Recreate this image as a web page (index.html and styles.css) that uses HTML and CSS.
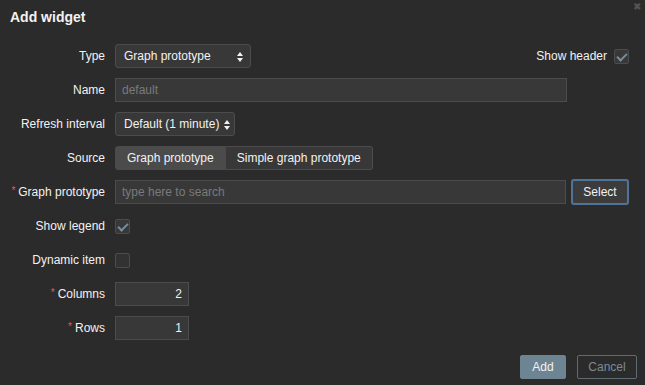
FILE: index.html
```html
<!DOCTYPE html>
<html lang="en">
<head>
  <meta charset="UTF-8" />
  <title>Add widget</title>
  <link rel="stylesheet" href="styles.css">
</head>
<body>
  <div class="dialog">
    <div class="dialog-head">
      <h2>Add widget</h2>
      <span class="close">&#x2716;</span>
    </div>

    <div class="form">
      <label>Type</label>
      <div class="field split">
        <div class="select type-select">Graph prototype<span class="arrows"></span></div>
        <div class="show-header">Show header <span class="check on"></span></div>
      </div>

      <label>Name</label>
      <div class="field"><div class="input name-input placeholder">default</div></div>

      <label>Refresh interval</label>
      <div class="field"><div class="select refresh-select">Default (1 minute)<span class="arrows"></span></div></div>

      <label>Source</label>
      <div class="field">
        <div class="segmented">
          <span class="seg active">Graph prototype</span>
          <span class="seg">Simple graph prototype</span>
        </div>
      </div>

      <label><span class="req">*</span> Graph prototype</label>
      <div class="field">
        <div class="input search-input placeholder">type here to search</div>
        <button class="btn-select">Select</button>
      </div>

      <label>Show legend</label>
      <div class="field"><span class="check on"></span></div>

      <label>Dynamic item</label>
      <div class="field"><span class="check"></span></div>

      <label><span class="req">*</span> Columns</label>
      <div class="field"><div class="input num">2</div></div>

      <label><span class="req">*</span> Rows</label>
      <div class="field"><div class="input num">1</div></div>
    </div>

    <div class="dialog-foot">
      <button class="btn-add">Add</button>
      <button class="btn-cancel">Cancel</button>
    </div>
  </div>
</body>
</html>
```

FILE: styles.css
```css
* {
  box-sizing: border-box;
  margin: 0;
  padding: 0;
  font-family: Arial, "Liberation Sans", sans-serif;
}

body {
  background: #2b2b2b;
  color: #f2f2f2;
  font-size: 12px;
  width: 645px;
  height: 385px;
  overflow: hidden;
}

.dialog {
  padding: 0 16px 0 10px;
  position: relative;
  height: 385px;
}

.dialog-head {
  height: 44px;
  padding-top: 9px;
}

h2 {
  font-size: 14px;
  font-weight: bold;
  color: #f2f2f2;
}

.close {
  position: absolute;
  top: 1px;
  right: 4px;
  font-size: 10px;
  color: #555;
}

.form {
  display: grid;
  grid-template-columns: 95px 1fr;
  column-gap: 10px;
  row-gap: 10px;
  grid-auto-rows: 24px;
}

.form label {
  display: flex;
  align-items: center;
  justify-content: flex-end;
  white-space: nowrap;
}

.req {
  color: #e45959;
  font-size: 10px;
  margin-right: 3px;
  position: relative;
  top: -2px;
}

.field {
  display: flex;
  align-items: center;
  gap: 5px;
}

.split {
  justify-content: space-between;
}

.select {
  height: 24px;
  border: 1px solid #4c4c4c;
  border-radius: 3px;
  background: #383838;
  padding: 0 14px 0 8px;
  display: flex;
  align-items: center;
  position: relative;
  white-space: nowrap;
}

.type-select { width: 136px; }
.refresh-select { width: 120px; }

.arrows {
  position: absolute;
  right: 7px;
  top: 7px;
  width: 6px;
  height: 10px;
}

.refresh-select .arrows { right: 4px; }

.arrows::before,
.arrows::after {
  content: "";
  position: absolute;
  left: 0;
  border-left: 3px solid transparent;
  border-right: 3px solid transparent;
}

.arrows::before {
  top: 0;
  border-bottom: 4px solid #f2f2f2;
}

.arrows::after {
  bottom: 0;
  border-top: 4px solid #f2f2f2;
}

.show-header {
  display: flex;
  align-items: center;
  gap: 7px;
}

.input {
  height: 24px;
  border: 1px solid #4c4c4c;
  background: #383838;
  padding: 0 6px;
  display: flex;
  align-items: center;
}

.placeholder { color: #7a7a7a; }

.name-input { width: 452px; }
.search-input { width: 451px; }

.num {
  width: 74px;
  justify-content: flex-end;
}

.check {
  display: inline-block;
  width: 15px;
  height: 15px;
  border: 1px solid #4c4c4c;
  border-radius: 2px;
  background: #323232;
  position: relative;
}

.check.on {
  background: #383838;
}

.check.on::after {
  content: "";
  position: absolute;
  left: 4px;
  top: 1px;
  width: 4px;
  height: 8px;
  border-right: 2px solid #768d9e;
  border-bottom: 2px solid #768d9e;
  transform: rotate(45deg);
}

.segmented {
  display: flex;
  height: 24px;
}

.seg {
  display: flex;
  align-items: center;
  padding: 0 11px;
  border: 1px solid #4c4c4c;
  background: #383838;
}

.seg.active {
  background: #4b4b4b;
  border-color: #4b4b4b;
  border-radius: 3px 0 0 3px;
}

.seg:last-child {
  border-radius: 0 3px 3px 0;
  border-left: none;
}

button {
  font-size: 12px;
  color: #f2f2f2;
  cursor: pointer;
  height: 24px;
  border-radius: 2px;
}

.btn-select {
  width: 58px;
  height: 26px;
  background: #3c3c3c;
  border: 2px solid #4f7498;
  border-radius: 3px;
}

.dialog-foot {
  position: absolute;
  right: 8px;
  bottom: 6px;
  display: flex;
  gap: 11px;
}

.btn-add {
  width: 46px;
  background: #6d8493;
  border: 1px solid #6d8493;
}

.btn-cancel {
  width: 60px;
  background: transparent;
  border: 1px solid #5f6b73;
  color: #7d8a94;
}
```
